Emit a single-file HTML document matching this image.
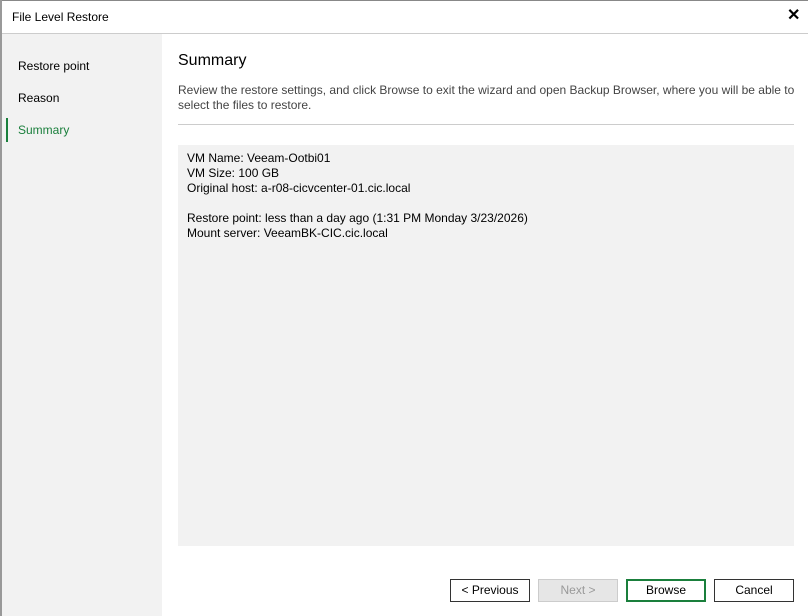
<!DOCTYPE html><html><head><style>
body{margin:0;width:808px;height:616px;background:#fff;font-family:"Liberation Sans",sans-serif;font-size:12px;color:#000;position:relative;overflow:hidden}
.a{position:absolute}
.btn{position:absolute;top:579px;width:78px;height:21px;border:1px solid #333;text-align:center;line-height:21px;background:#fff}
</style></head><body>
<div class="a" style="left:0;top:0;width:808px;height:1px;background:#888"></div>
<div class="a" style="left:0;top:0;width:2px;height:616px;background:#999"></div>
<div class="a" style="left:12px;top:10px;font-size:12px">File Level Restore</div>
<div class="a" style="left:787px;top:5px;font-size:16px;font-weight:bold">✕</div>
<div class="a" style="left:2px;top:33px;width:806px;height:1px;background:#ccc"></div>
<div class="a" style="left:2px;top:34px;width:160px;height:582px;background:#f2f2f2"></div>
<div class="a" style="left:18px;top:59px">Restore point</div>
<div class="a" style="left:18px;top:91px">Reason</div>
<div class="a" style="left:6px;top:118px;width:2px;height:24px;background:#1a7f3c"></div>
<div class="a" style="left:18px;top:123px;color:#1a7f3c">Summary</div>
<div class="a" style="left:178px;top:52px;font-size:16px">Summary</div>
<div class="a" style="left:178px;top:83px;color:#444;line-height:15px;width:620px">Review the restore settings, and click Browse to exit the wizard and open Backup Browser, where you will be able to select the files to restore.</div>
<div class="a" style="left:178px;top:124px;width:616px;height:1px;background:#ccc"></div>
<div class="a" style="left:178px;top:145px;width:616px;height:401px;background:#f2f2f2"></div>
<div class="a" style="left:187px;top:151px;line-height:15px">VM Name: Veeam-Ootbi01<br>VM Size: 100 GB<br>Original host: a-r08-cicvcenter-01.cic.local<br><br>Restore point: less than a day ago (1:31 PM Monday 3/23/2026)<br>Mount server: VeeamBK-CIC.cic.local</div>
<div class="btn" style="left:450px">&lt; Previous</div>
<div class="btn" style="left:538px;background:#e6e6e6;border-color:#ccc;color:#999">Next &gt;</div>
<div class="btn" style="left:626px;border:2px solid #1a7f3c;width:76px;height:19px;line-height:19px">Browse</div>
<div class="btn" style="left:714px">Cancel</div>
</body></html>
